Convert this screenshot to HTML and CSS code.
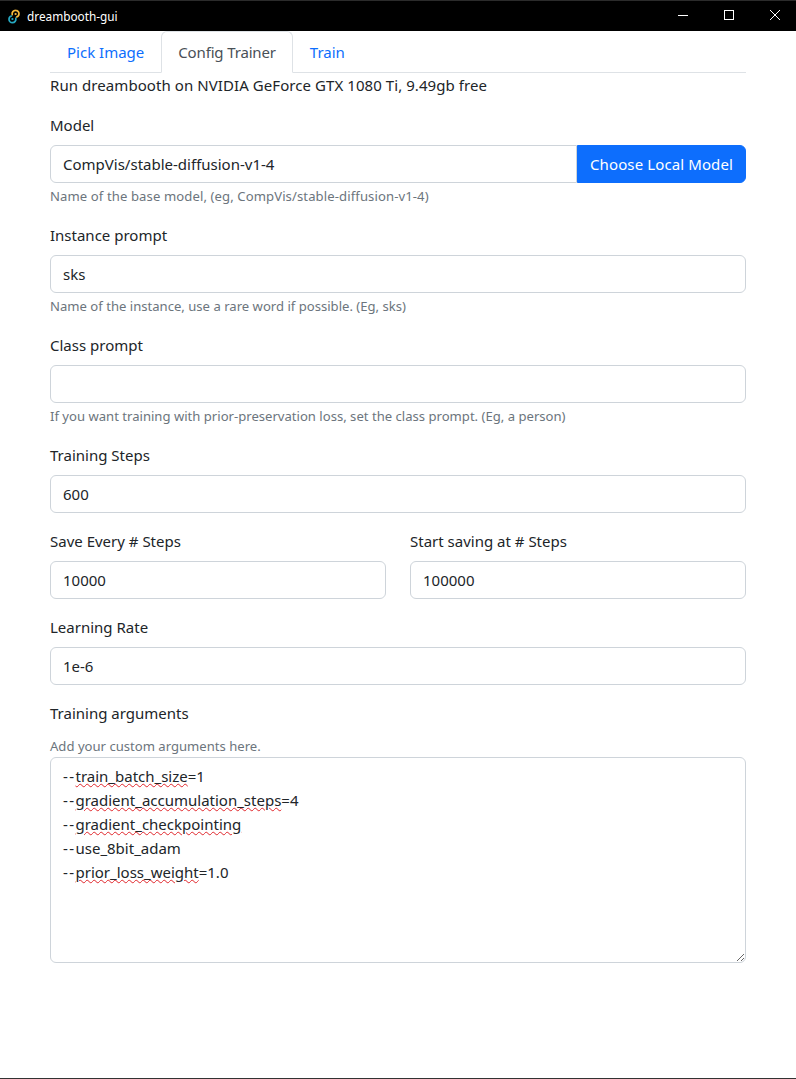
FILE: index.html
```html
<!DOCTYPE html>
<html lang="en">
<head>
  <meta charset="UTF-8">
  <title>dreambooth-gui</title>
  <link rel="stylesheet" href="styles.css">
</head>
<body>
  <header class="titlebar">
    <svg class="app-icon" viewBox="0 0 14 15" width="14" height="15">
      <path d="M5.2 5.6A3.4 3.4 0 0 1 8.6 1.4 3.4 3.4 0 0 1 12 4.8 3.4 3.4 0 0 1 9.6 8" fill="none" stroke="#f4b93c" stroke-width="1.7" stroke-linecap="round"/>
      <circle cx="8.6" cy="5" r="1.1" fill="#f4b93c"/>
      <path d="M8.8 9.4A3.4 3.4 0 0 1 5.4 13.6 3.4 3.4 0 0 1 2 10.2 3.4 3.4 0 0 1 4.4 7" fill="none" stroke="#26a9c2" stroke-width="1.7" stroke-linecap="round"/>
      <circle cx="5.4" cy="10" r="1.1" fill="#26a9c2"/>
    </svg>
    <span class="app-title">dreambooth-gui</span>
    <div class="window-controls">
      <span class="win-btn"><svg width="12" height="12" viewBox="0 0 12 12"><path d="M1 6.5h10" stroke="#fff"/></svg></span>
      <span class="win-btn"><svg width="12" height="12" viewBox="0 0 12 12"><rect x="1.5" y="1.5" width="9" height="9" fill="none" stroke="#fff"/></svg></span>
      <span class="win-btn"><svg width="12" height="12" viewBox="0 0 12 12"><path d="M1 1l10 10M11 1L1 11" stroke="#fff"/></svg></span>
    </div>
  </header>

  <main class="container">
    <nav class="tabs">
      <a class="tab">Pick Image</a>
      <a class="tab active">Config Trainer</a>
      <a class="tab">Train</a>
    </nav>

    <p class="gpu-info">Run dreambooth on NVIDIA GeForce GTX 1080 Ti, 9.49gb free</p>

    <form>
      <div class="form-group">
        <label for="model">Model</label>
        <div class="input-group">
          <input type="text" id="model" value="CompVis/stable-diffusion-v1-4">
          <button type="button" class="primary">Choose Local Model</button>
        </div>
        <div class="help help-model">Name of the base model, (eg, CompVis/stable-diffusion-v1-4)</div>
      </div>

      <div class="form-group">
        <label for="instance">Instance prompt</label>
        <input type="text" id="instance" value="sks">
        <div class="help">Name of the instance, use a rare word if possible. (Eg, sks)</div>
      </div>

      <div class="form-group">
        <label for="class">Class prompt</label>
        <input type="text" id="class">
        <div class="help">If you want training with prior-preservation loss, set the class prompt. (Eg, a person)</div>
      </div>

      <div class="form-group">
        <label for="steps">Training Steps</label>
        <input type="text" id="steps" value="600">
      </div>

      <div class="form-row">
        <div>
          <label for="saveEvery">Save Every # Steps</label>
          <input type="text" id="saveEvery" value="10000">
        </div>
        <div>
          <label for="saveStart">Start saving at # Steps</label>
          <input type="text" id="saveStart" value="100000">
        </div>
      </div>

      <div class="form-group">
        <label for="rate">Learning Rate</label>
        <input type="text" id="rate" value="1e-6">
      </div>

      <div class="form-group">
        <label>Training arguments</label>
        <div class="help help-above">Add your custom arguments here.</div>
        <div class="args-box">
          <div><span class="dash">--</span><span class="typo">train_batch_size</span>=1</div>
          <div><span class="dash">--</span><span class="typo">gradient_accumulation_steps</span>=4</div>
          <div><span class="dash">--</span><span class="typo">gradient_checkpointing</span></div>
          <div><span class="dash">--</span>use_8bit_adam</div>
          <div><span class="dash">--</span><span class="typo">prior_loss_weight</span>=1.0</div>
        </div>
      </div>
    </form>
  </main>
</body>
</html>
```
FILE: styles.css
```css
* {
  box-sizing: border-box;
}

html, body {
  height: 100%;
}

body {
  margin: 0;
  font-family: "Noto Sans", "Open Sans", sans-serif;
  font-size: 15px;
  line-height: 24px;
  color: #212529;
  background-color: white;
  border-bottom: 1px solid #333;
  overflow: hidden;
}

.titlebar {
  display: flex;
  align-items: center;
  height: 31px;
  padding-left: 7px;
  background-color: black;
  border-top: 1px solid #2b2b2b;
  color: white;
}

.app-icon {
  margin-right: 6px;
}

.app-title {
  font-size: 11.8px;
}

.window-controls {
  display: flex;
  align-self: flex-start;
  margin-left: auto;
  margin-right: -2px;
}

.win-btn {
  display: flex;
  align-items: center;
  justify-content: center;
  width: 46px;
  height: 28px;
}

.container {
  padding: 0 50px;
}

.tabs {
  display: flex;
  border-bottom: 1px solid #dee2e6;
}

.tab {
  padding: 8px 16px;
  margin-bottom: -1px;
  border: 1px solid transparent;
  border-radius: 6px 6px 0 0;
  color: #0d6efd;
}

.tab.active {
  color: #495057;
  background-color: white;
  border-color: #dee2e6 #dee2e6 white;
  letter-spacing: -0.15px;
}

.gpu-info {
  margin: 0 0 16px;
  letter-spacing: 0.07px;
}

.form-group {
  margin-bottom: 16px;
}

label {
  display: block;
  margin-bottom: 8px;
}

input[type="text"] {
  display: block;
  width: 100%;
  height: 38px;
  padding: 6px 12px;
  border: 1px solid #ced4da;
  border-radius: 6px;
  font: inherit;
  color: #212529;
}

.input-group {
  display: flex;
}

.input-group input[type="text"] {
  flex: 1;
  border-radius: 6px 0 0 6px;
}

button {
  padding: 6px 12px;
  border: 1px solid #0d6efd;
  border-radius: 0 6px 6px 0;
  font: inherit;
  letter-spacing: 0.11px;
  white-space: nowrap;
  cursor: pointer;
}

button.primary {
  background-color: #0d6efd;
  color: white;
}

.help {
  margin-top: 3px;
  margin-bottom: 17px;
  font-size: 13.1px;
  line-height: 20px;
  color: #6c757d;
}

.form-group:has(> .help) {
  margin-bottom: 0;
}

.help-model {
  letter-spacing: 0.1px;
}

.help-above {
  margin-top: 11px;
  margin-bottom: 1px;
}

.form-row {
  display: grid;
  grid-template-columns: 1fr 1fr;
  gap: 24px;
  margin-bottom: 16px;
}

.args-box {
  height: 206px;
  padding: 6px 12px;
  border: 1px solid #ced4da;
  border-radius: 6px;
  overflow: auto;
  resize: vertical;
}

.dash {
  letter-spacing: 1.4px;
}

.typo {
  text-decoration: underline wavy #e0262b 1px;
  text-underline-offset: 1px;
}
```
